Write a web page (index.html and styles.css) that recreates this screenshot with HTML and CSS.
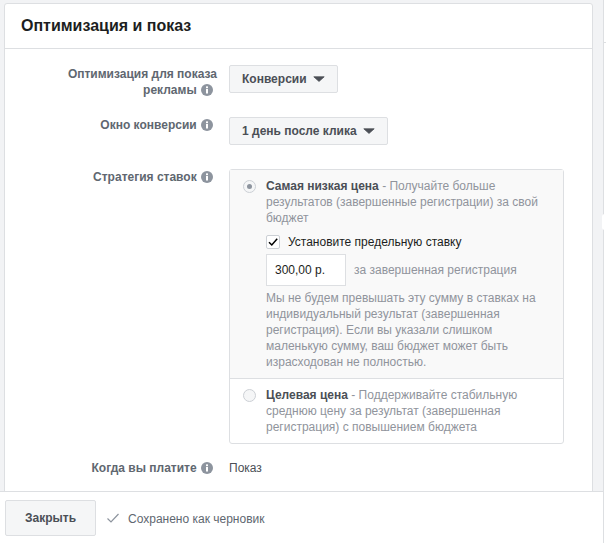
FILE: index.html
```html
<!DOCTYPE html>
<html lang="ru">
<head>
<meta charset="utf-8">
<title>Оптимизация и показ</title>
<link rel="stylesheet" href="styles.css">
</head>
<body>
<div class="page">
  <div class="main">
    <div class="scroll">
      <section class="card">
        <h2 class="card-title">Оптимизация и показ</h2>
        <div class="form">
          <div class="row row-a">
            <div class="label">Оптимизация для показа рекламы <svg class="info" viewBox="0 0 12 12"><circle cx="6" cy="6" r="6" fill="#8d949e"/><rect x="5" y="5" width="2" height="4.5" fill="#fff"/><rect x="5" y="2.4" width="2" height="1.8" fill="#fff"/></svg></div>
            <button class="select">Конверсии <svg class="caret" viewBox="0 0 12 6"><path d="M.8.8H11.2L6 5.4Z" fill="#4b4f56" stroke="#4b4f56" stroke-width=".8" stroke-linejoin="round"/></svg></button>
          </div>
          <div class="row row-b">
            <div class="label">Окно конверсии <svg class="info" viewBox="0 0 12 12"><circle cx="6" cy="6" r="6" fill="#8d949e"/><rect x="5" y="5" width="2" height="4.5" fill="#fff"/><rect x="5" y="2.4" width="2" height="1.8" fill="#fff"/></svg></div>
            <button class="select">1 день после клика <svg class="caret" viewBox="0 0 12 6"><path d="M.8.8H11.2L6 5.4Z" fill="#4b4f56" stroke="#4b4f56" stroke-width=".8" stroke-linejoin="round"/></svg></button>
          </div>
          <div class="row row-c">
            <div class="label">Стратегия ставок <svg class="info" viewBox="0 0 12 12"><circle cx="6" cy="6" r="6" fill="#8d949e"/><rect x="5" y="5" width="2" height="4.5" fill="#fff"/><rect x="5" y="2.4" width="2" height="1.8" fill="#fff"/></svg></div>
            <div class="options">
              <div class="option selected">
                <span class="radio on"></span>
                <div class="option-body">
                  <p class="desc"><b>Самая низкая цена</b> - Получайте больше результатов (завершенные регистрации) за свой бюджет</p>
                  <div class="check-line">
                    <span class="checkbox"><svg viewBox="0 0 14 14" width="14" height="14"><path d="M3 7.2 5.8 10 11.2 3.8" fill="none" stroke="#000" stroke-width="1.5"/></svg></span>
                    <span>Установите предельную ставку</span>
                  </div>
                  <div class="bid-line">
                    <div class="bid-input">300,00 р.</div>
                    <span class="bid-note">за завершенная регистрация</span>
                  </div>
                  <p class="desc hint">Мы не будем превышать эту сумму в ставках на индивидуальный результат (завершенная регистрация). Если вы указали слишком маленькую сумму, ваш бюджет может быть израсходован не полностью.</p>
                </div>
              </div>
              <div class="option">
                <span class="radio"></span>
                <div class="option-body">
                  <p class="desc"><b>Целевая цена</b> - Поддерживайте стабильную среднюю цену за результат (завершенная регистрация) с повышением бюджета</p>
                </div>
              </div>
            </div>
          </div>
          <div class="row row-d">
            <div class="label">Когда вы платите <svg class="info" viewBox="0 0 12 12"><circle cx="6" cy="6" r="6" fill="#8d949e"/><rect x="5" y="5" width="2" height="4.5" fill="#fff"/><rect x="5" y="2.4" width="2" height="1.8" fill="#fff"/></svg></div>
            <div class="value">Показ</div>
          </div>
        </div>
      </section>
    </div>
    <footer class="footer">
      <button class="close">Закрыть</button>
      <svg class="saved-icon" viewBox="0 0 14 12" width="14" height="12"><path d="M1.5 6.5 5 10 12.5 2" fill="none" stroke="#8d949e" stroke-width="1.2"/></svg>
      <span class="saved">Сохранено как черновик</span>
    </footer>
  </div>
  <aside class="rail">
    <div class="rail-head"></div>
    <span class="rail-tab"></span>
  </aside>
</div>
</body>
</html>
```
FILE: styles.css
```css
* { box-sizing: border-box; }
html, body { margin: 0; padding: 0; height: 100%; }
body { font-family: "Liberation Sans", Arial, sans-serif; font-size: 12px; background: #f2f3f5; color: #1c1e21; overflow: hidden; }
.page { height: 543px; display: flex; }
.main { width: 603px; flex: none; display: flex; flex-direction: column; }
.scroll { flex: 1; min-height: 0; overflow: hidden; padding: 3px 0 0 4px; }
.card { width: 589px; height: 520px; background: #fff; border: 1px solid #dddfe2; border-radius: 3px; }
.card-title { margin: 0; height: 45px; padding: 0 16px; line-height: 43px; font-size: 16px; font-weight: bold; color: #1c1e21; border-bottom: 1px solid #dddfe2; }
.form { padding-top: 16px; }
.row { display: flex; gap: 12px; }
.label { width: 212px; flex: none; text-align: right; font-weight: bold; line-height: 16px; color: #606770; padding-left: 40px; }
.info { width: 12px; height: 12px; display: inline-block; vertical-align: -2px; margin-left: 1px; margin-right: 4px; }
.row-a { height: 52px; }
.row-a .label { padding-top: 1px; }
.row-b { height: 52px; }
.select { height: 28px; padding: 0 12px; border: 1px solid #dddfe2; border-radius: 2px; background: #f5f6f7; font: bold 12px "Liberation Sans", Arial, sans-serif; color: #4b4f56; display: flex; align-items: center; gap: 6px; }
.caret { width: 12px; height: 6px; display: block; }
.options { width: 335px; border: 1px solid #dddfe2; border-radius: 3px; }
.option { display: flex; padding: 8px 12px 8px 13px; gap: 10px; }
.option.selected { background: #f9f9f9; border-bottom: 1px solid #dddfe2; }
.radio { width: 13px; height: 13px; flex: none; border-radius: 50%; border: 1px solid #ccd0d5; background: #f5f6f7; margin-top: 2px; position: relative; }
.radio.on::after { content: ""; position: absolute; left: 3px; top: 3px; width: 5px; height: 5px; border-radius: 50%; background: #8d949e; }
.option-body { flex: 1; min-width: 0; }
.desc { margin: 0; line-height: 16px; color: #90949c; }
.desc b { color: #4b4f56; }
.check-line { display: flex; align-items: center; gap: 8px; margin-top: 8px; height: 16px; color: #1c1e21; }
.checkbox { width: 14px; height: 14px; border: 1px solid #ccd0d5; background: #fff; display: block; flex: none; border-radius: 2px; }
.checkbox svg { display: block; margin: -1px; }
.bid-line { display: flex; align-items: center; gap: 8px; margin-top: 4px; }
.bid-input { width: 80px; height: 32px; line-height: 30px; padding-left: 8px; background: #fff; border: 1px solid #dddfe2; color: #1c1e21; }
.bid-note { color: #90949c; }
.hint { margin-top: 4px; }
.row-d { margin-top: 16px; }
.row-d .value { color: #4b4f56; line-height: 16px; }
.footer { height: 52px; flex: none; display: flex; align-items: flex-start; background: #fff; border-top: 1px solid #dddfe2; padding: 8px 0 0 5px; }
.close { width: 91px; height: 36px; background: #f5f6f7; border: 1px solid #dddfe2; border-radius: 2px; font: bold 12px "Liberation Sans", Arial, sans-serif; color: #4b4f56; }
.saved-icon { margin: 12px 0 0 10px; }
.saved { margin: 11px 0 0 8px; line-height: 16px; color: #606770; }
.rail { flex: 1; background: #fff; border-left: 1px solid #dddfe2; position: relative; }
.rail-head { height: 43px; border-bottom: 1px solid #dddfe2; }
.rail-tab { position: absolute; left: -2px; top: 214px; width: 4px; height: 16px; background: #fff; border-radius: 3px 0 0 3px; }
```
